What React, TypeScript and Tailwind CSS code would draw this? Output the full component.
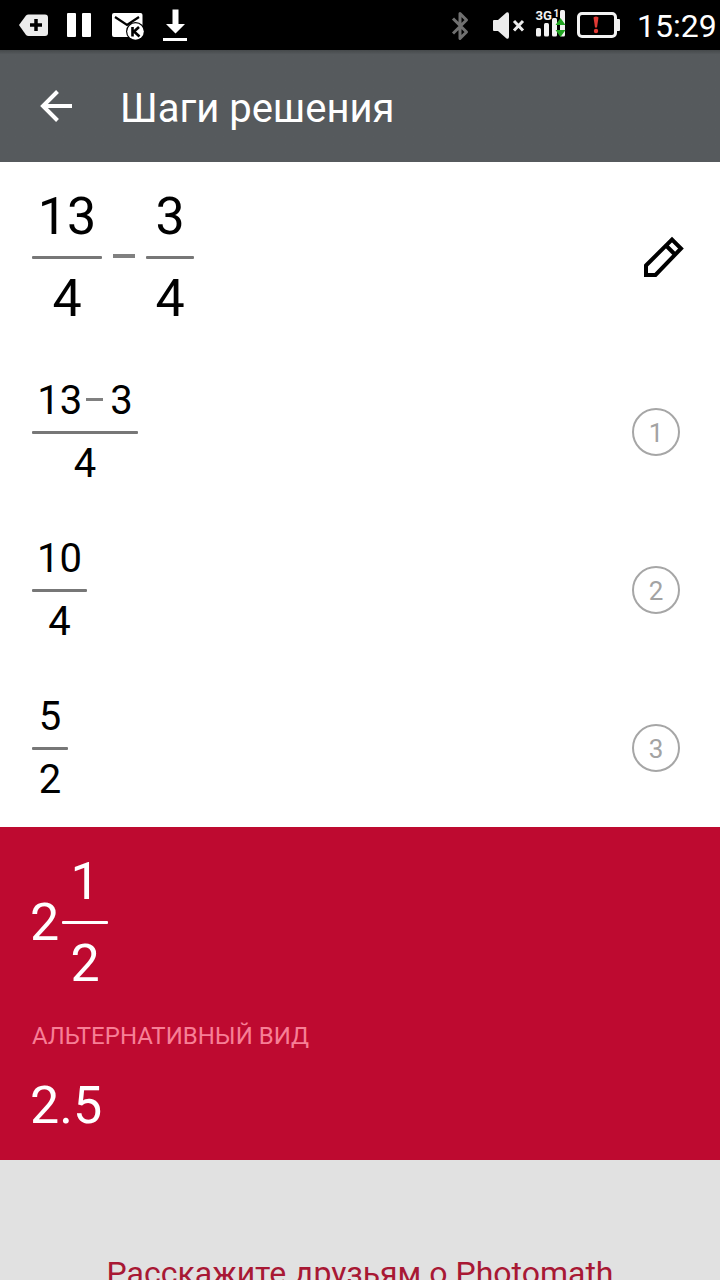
import React from "react";
import { clsx } from "clsx";

interface FractionProps {
  top: React.ReactNode;
  bottom: React.ReactNode;
  size?: "sm" | "lg";
  className?: string;
  barClassName?: string;
}

function Fraction({ top, bottom, size = "sm", className, barClassName = "bg-[#777777]" }: FractionProps) {
  const large = size === "lg";
  const line = large ? "h-[60px] text-[52px] leading-[62px]" : "h-12 text-[40px] leading-[50px]";

  return (
    <div className={clsx("flex flex-col", className)}>
      <div className={clsx("flex justify-center", line)}>{top}</div>
      <div className={clsx("h-[3px] rounded-[1px]", large ? "mt-[10px] mb-[9px]" : "mt-[7px] mb-[5px]", barClassName)} />
      <div className={clsx("flex justify-center", line)}>{bottom}</div>
    </div>
  );
}

interface Step {
  id: number;
  top: React.ReactNode;
  bottom: string;
  width: string;
}

const steps: Step[] = [
  {
    id: 1,
    top: (
      <>
        <span>13</span>
        <span className="mt-[22px] mr-[7px] ml-[4px] h-[3px] w-[17px] bg-[#808080]" />
        <span>3</span>
      </>
    ),
    bottom: "4",
    width: "w-[106px]",
  },
  { id: 2, top: "10", bottom: "4", width: "w-[55px]" },
  { id: 3, top: "5", bottom: "2", width: "w-9" },
];

function StatusBar() {
  return (
    <div className="flex h-[50px] items-start bg-black text-white">
      <svg width="220" height="50" viewBox="0 0 220 50" fill="#fff">
        <path d="M19 25 26 15.5Q27 14.500 28.500 14.500H45q3 0 3 3V33q0 3-3 3H28.500Q27 36 26 35Z" fill="#ececec" />
        <path d="M30 25h12M36 19v12" stroke="#000" strokeWidth="3.500" />
        <rect x="67" y="13" width="9" height="24" rx="1" />
        <rect x="82" y="13" width="9" height="24" rx="1" />
        <rect x="112" y="13" width="30.500" height="24" rx="2" />
        <path d="m115 17 12 8 12-8" fill="none" stroke="#000" strokeWidth="2.200" />
        <circle cx="135.500" cy="31.500" r="9.500" fill="#000" />
        <circle cx="135.500" cy="31.500" r="8.300" />
        <path d="M132.500 27v9.500M139 27l-5 4.500 5.500 5" fill="none" stroke="#000" strokeWidth="2.600" />
        <path d="M172.500 9.500h6V24h6.500l-9.500 9.500L166 24h6.500Z" />
        <rect x="163" y="38" width="24" height="3" />
      </svg>
      <svg className="ml-[220px]" width="190" height="50" viewBox="440 0 190 50" fill="none">
        <path d="m453 18.500 13.500 13.500-6.500 6.500v-25l6.500 6.500L453 33.500" stroke="#707070" strokeWidth="3" strokeLinejoin="round" />
        <path d="M494 20h4l8.500-7.500q2.500-1 2.500 2v22q0 3-2.500 2L498 31h-4q-1 0-1-1v-9q0-1 1-1Z" fill="#ececec" />
        <path d="m514 21 9 9.500m0-9.500-9 9.500" stroke="#ececec" strokeWidth="3" />
        <g fill="#f2f2f2">
          <rect x="536" y="28" width="5" height="8.500" rx="1.500" />
          <rect x="544" y="23" width="5" height="13.500" rx="1.500" />
          <rect x="552" y="18" width="5" height="18.500" rx="1.500" />
          <rect x="560" y="10" width="5" height="26.500" rx="1.500" />
          <text x="535.500" y="19.500" fontSize="12.500" fontWeight="700" fontFamily="Roboto, sans-serif" textLength="16.500" lengthAdjust="spacingAndGlyphs">3G</text>
          <text x="553.500" y="16.500" fontSize="10" fontWeight="700" fontFamily="Roboto, sans-serif">1</text>
        </g>
        <path d="m560.500 18 5 7h-10Zm0 19 5-7h-10Z" fill="#22a522" />
        <rect x="578.500" y="13.500" width="37" height="23" rx="3.500" stroke="#f2f2f2" strokeWidth="3" />
        <path d="M617 19h2q1 0 1 1v10q0 1-1 1h-2Z" fill="#f2f2f2" />
        <path d="M593.500 17.500q2.500-2 5 0l-1.500 10h-2Z" fill="#e03a35" />
        <circle cx="596" cy="31" r="2.200" fill="#e03a35" />
      </svg>
      <span className="ml-[7px] text-[32px] leading-[52px] whitespace-nowrap">15:29</span>
    </div>
  );
}

function Header() {
  return (
    <header className="flex h-28 items-center bg-[#565a5d] bg-linear-to-b from-[#45494b] to-[#565a5d] to-4%">
      <svg className="ml-9 shrink-0" width="40" height="40" viewBox="0 0 40 40" fill="none" stroke="#fff" strokeWidth="4">
        <path d="M36 20H7M21.500 5.500 7 20l14.500 14.500" />
      </svg>
      <h1 className="mt-[6px] ml-[44px] text-[40px] leading-[48px] whitespace-nowrap text-white">Шаги решения</h1>
    </header>
  );
}

export default function App() {
  return (
    <div className="flex h-[1280px] w-[720px] flex-col overflow-hidden bg-white font-['Roboto',sans-serif] text-black">
      <StatusBar />
      <Header />

      <section className="flex h-[191px] shrink-0 items-start pt-6 pl-8">
        <Fraction size="lg" top="13" bottom="4" className="w-[70px]" />
        <span className="mt-[68px] ml-[11px] h-[4px] w-[22px] bg-[#808080]" />
        <Fraction size="lg" top="3" bottom="4" className="ml-[11px] w-12" />
        <svg className="mt-[50px] mr-[35px] ml-auto" width="42" height="42" viewBox="643 236 42 42" fill="none" stroke="#000" strokeWidth="4">
          <path d="M646 265.500 672 239.500l9 9L655.500 275H646ZM666 245.500l9 9" />
        </svg>
      </section>

      {steps.map((step) => (
        <section key={step.id} className="flex h-[158px] shrink-0 items-start pt-[23px] pl-8">
          <Fraction top={step.top} bottom={step.bottom} className={step.width} />
          <span className="mt-8 mr-10 ml-auto flex size-12 items-center justify-center rounded-full border-2 border-[#a6a6a6] pt-[2px] text-[26px] leading-none text-[#a3a3a3]">
            {step.id}
          </span>
        </section>
      ))}

      <section className="flex h-[333px] shrink-0 flex-col bg-[#be0a30] pt-6 pl-[30px] text-white">
        <div className="flex items-center">
          <span className="h-[60px] text-[52px] leading-[62px]">2</span>
          <Fraction size="lg" top="1" bottom="2" className="ml-[3px] w-[46px]" barClassName="bg-white" />
        </div>
        <p className="mt-[27px] ml-[2px] text-2xl leading-8 whitespace-nowrap text-[#f77f96]">АЛЬТЕРНАТИВНЫЙ ВИД</p>
        <p className="mt-6 text-[52px] leading-[60px]">2.5</p>
      </section>

      <footer className="flex flex-1 justify-center overflow-hidden bg-[#e1e1e1] pt-[89px] text-[#a81834]">
        <span className="text-[32px] leading-[48px] whitespace-nowrap">Расскажите друзьям о Photomath</span>
      </footer>
    </div>
  );
}
